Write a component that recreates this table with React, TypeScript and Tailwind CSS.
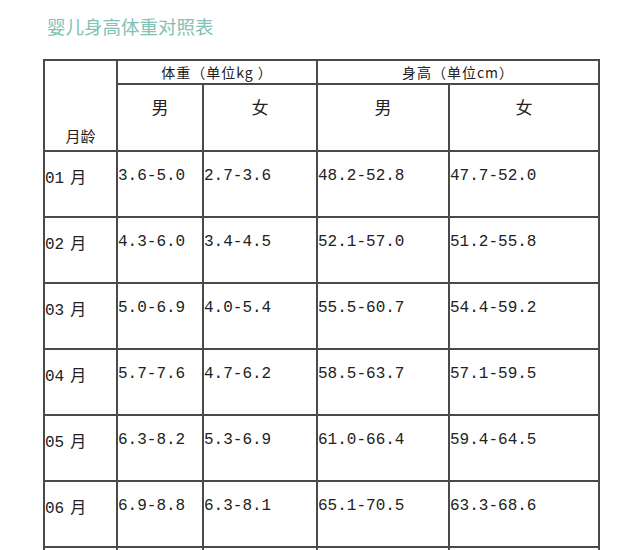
const rows = [
	["01", "3.6-5.0", "2.7-3.6", "48.2-52.8", "47.7-52.0"],
	["02", "4.3-6.0", "3.4-4.5", "52.1-57.0", "51.2-55.8"],
	["03", "5.0-6.9", "4.0-5.4", "55.5-60.7", "54.4-59.2"],
	["04", "5.7-7.6", "4.7-6.2", "58.5-63.7", "57.1-59.5"],
	["05", "6.3-8.2", "5.3-6.9", "61.0-66.4", "59.4-64.5"],
	["06", "6.9-8.8", "6.3-8.1", "65.1-70.5", "63.3-68.6"],
]

const cjk = "font-['Noto_Sans_CJK_SC',sans-serif]"
const mono = "font-['Liberation_Mono','Noto_Sans_CJK_SC',monospace]"
const cell = "border-2 border-[#4a4a4a]"

export default function App() {
	return (
		<div className="h-[550px] w-[640px] overflow-hidden bg-white text-[#222]">
			<h1 className={`${cjk} pl-[47px] pt-[13px] text-[18.5px] leading-[26px] font-normal text-[#80c2b5]`}>
				婴儿身高体重对照表
			</h1>
			<table className="mt-[20px] ml-[43px] w-[555px] table-fixed border-collapse">
				<colgroup>
					<col className="w-[73px]" />
					<col className="w-[86px]" />
					<col className="w-[114px]" />
					<col className="w-[132px]" />
					<col className="w-[150px]" />
				</colgroup>
				<thead>
					<tr className="h-[24px]">
						<td
							rowSpan={2}
							className={`${cjk} ${cell} pb-[3px] text-center align-bottom text-[15px] leading-[22px]`}
						>
							月龄
						</td>
						<td colSpan={2} className={`${cjk} ${cell} text-center text-[14px] leading-[20px] tracking-[1px]`}>
							体重（单位kg ）
						</td>
						<td colSpan={2} className={`${cjk} ${cell} text-center text-[14px] leading-[20px] tracking-[1px]`}>
							身高（单位cm）
						</td>
					</tr>
					<tr className="h-[67px]">
						{["男", "女", "男", "女"].map((s, i) => (
							<td
								key={i}
								className={`${cjk} ${cell} pt-[10px] text-center align-top text-[17px] leading-[24px]`}
							>
								{s}
							</td>
						))}
					</tr>
				</thead>
				<tbody>
					{rows.map((r) => (
						<tr key={r[0]} className="h-[66px]">
							<td className={`${cell} pt-[12px] align-top`}>
								<span className={`${mono} text-[16px] leading-[24px]`}>{r[0]}</span>
								<span className={`${cjk} ml-[6px] text-[16px] leading-[24px]`}>月</span>
							</td>
							{r.slice(1).map((v, i) => (
								<td
									key={i}
									className={`${mono} ${cell} pt-[12px] align-top text-[16px] leading-[24px] whitespace-nowrap`}
								>
									{v}
								</td>
							))}
						</tr>
					))}
					{/* 下一行只露出顶部边框 */}
					<tr className="h-[66px]">
						<td className={cell} />
						<td className={cell} />
						<td className={cell} />
						<td className={cell} />
						<td className={cell} />
					</tr>
				</tbody>
			</table>
		</div>
	)
}
